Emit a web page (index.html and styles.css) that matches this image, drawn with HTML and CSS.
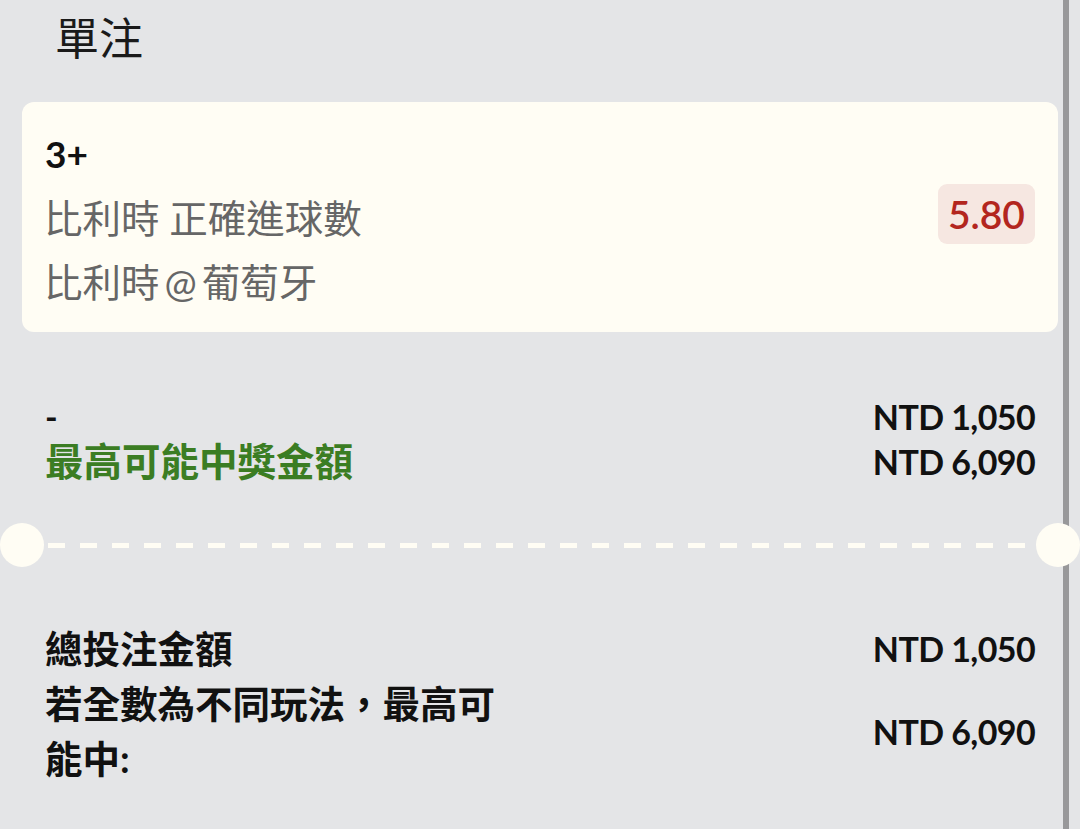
FILE: index.html
```html
<!DOCTYPE html>
<html lang="zh-Hant">
<head>
    <meta charset="UTF-8">
    <meta name="viewport" content="width=device-width, initial-scale=1.0">
    <title>單注</title>
    <link rel="stylesheet" href="styles.css">
</head>
<body>
    <div class="scrollbar"></div>
    <div class="slip">
        <h2 class="slip-title">單注</h2>

        <!-- selection -->
        <div class="bet-card">
            <div class="bet-info">
                <div class="bet-pick">3+</div>
                <div class="bet-market">比利時 正確進球數</div>
                <div class="bet-market">比利時<span class="at">@</span>葡萄牙</div>
            </div>
            <div class="bet-odds">5.80</div>
        </div>

        <div class="summary">
            <div class="row">
                <span class="dash-label">-</span>
                <span class="amount">NTD 1,050</span>
            </div>
            <div class="row">
                <span class="win-label">最高可能中獎金額</span>
                <span class="amount">NTD 6,090</span>
            </div>
        </div>

        <!-- ticket tear line -->
        <div class="divider">
            <span class="notch"></span>
            <span class="dashes"></span>
            <span class="notch"></span>
        </div>

        <div class="totals">
            <div class="row">
                <span class="total-label">總投注金額</span>
                <span class="amount">NTD 1,050</span>
            </div>
            <div class="row">
                <span class="total-label">若全數為不同玩法，最高可能中:</span>
                <span class="amount">NTD 6,090</span>
            </div>
        </div>
    </div>
</body>
</html>
```

FILE: styles.css
```css
* {
    margin: 0;
    padding: 0;
    box-sizing: border-box;
}
body {
    font-family: Lato, "Noto Sans CJK TC", sans-serif;
    background-color: #e4e5e7;
    color: #111;
    overflow: hidden;
}
.scrollbar {
    position: absolute;
    top: 0;
    right: 11px;
    width: 6px;
    height: 100vh;
    background-color: #98989a;
}
.slip {
    padding: 0 22px;
}
.slip-title {
    font-size: 44px;
    font-weight: 400;
    line-height: 60px;
    padding: 8px 0 0 33px;
    color: #1a1a1a;
}
.bet-card {
    display: flex;
    align-items: center;
    justify-content: space-between;
    margin-top: 34px;
    padding: 20px 23px 18px 22px;
    background-color: #fffdf4;
    border-radius: 12px;
}
.bet-info {
    font-size: 37px;
    line-height: 64px;
}
.bet-pick {
    font-weight: 700;
    padding-left: 1px;
}
.bet-market {
    font-size: 38.5px;
    color: #666;
}
.at {
    margin: 0 5px;
}
.bet-odds {
    margin-top: -8px;
    padding: 0 10px;
    line-height: 60px;
    font-size: 39px;
    font-weight: 600;
    color: #b3261e;
    background-color: #f6e7e1;
    border-radius: 9px;
}
.row {
    display: flex;
    align-items: center;
    justify-content: space-between;
}
.amount {
    font-weight: 700;
    font-size: 34px;
    letter-spacing: -0.6px;
}
.summary {
    margin-top: 62px;
    padding: 0 23px;
    line-height: 45px;
}
.dash-label {
    font-weight: 700;
    font-size: 34px;
}
.win-label {
    font-size: 38.5px;
    font-weight: 700;
    color: #3b7d23;
}
.divider {
    display: flex;
    align-items: center;
    margin: 39px -22px 0;
}
.notch {
    position: relative;
    z-index: 1;
    width: 44px;
    height: 44px;
    border-radius: 50%;
    background-color: #fffdf4;
    flex-shrink: 0;
}
.dashes {
    flex: 1;
    height: 5px;
    margin: 0 4px;
    background: repeating-linear-gradient(to right, #fffdf4 0 17px, transparent 17px 32px);
}
.totals {
    margin-top: 54px;
    padding: 0 23px;
    line-height: 55px;
}
.total-label {
    max-width: 460px;
    font-size: 37.5px;
    font-weight: 700;
}
```
